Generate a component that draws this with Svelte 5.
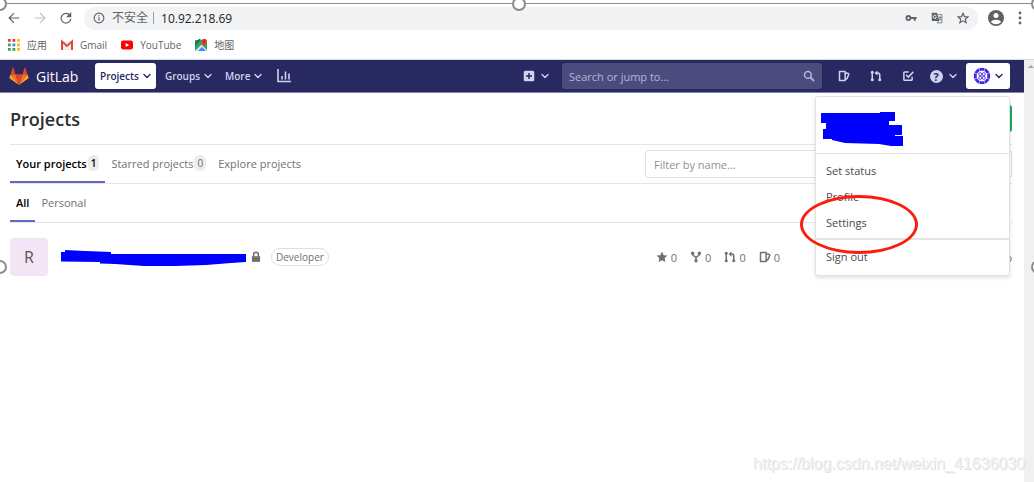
<script>
  const bookmarks = [
    { id: 'apps', label: '应用' },
    { id: 'gmail', label: 'Gmail' },
    { id: 'youtube', label: 'YouTube' },
    { id: 'maps', label: '地图' },
  ];

  const appDots = ['#ea4335', '#ea4335', '#fbbc05', '#34a853', '#4285f4', '#fbbc05', '#34a853', '#34a853', '#fbbc05'];

  const tabs = [
    { label: 'Your projects', count: 1 },
    { label: 'Starred projects', count: 0 },
    { label: 'Explore projects' },
  ];

  const scopes = ['All', 'Personal'];
  const handles = ['top-left', 'top-middle', 'top-right', 'middle-left', 'middle-right'];
  const stats = ['star', 'fork', 'merge', 'issues'];
  const petals = [0, 45, 90, 135, 180, 225, 270, 315];

  let activeTab = $state('Your projects');
  let activeScope = $state('All');
  let menuOpen = $state(true);
  let filter = $state('');
</script>

{#snippet chevron()}
  <svg class="chevron" viewBox="0 0 8 8" aria-hidden="true">
    <path d="M1 2.5 4 5.5 7 2.5" fill="none" stroke="currentColor" stroke-width="1.4" stroke-linecap="round" stroke-linejoin="round" />
  </svg>
{/snippet}

{#snippet icon(name)}
  <svg class="icon" viewBox="0 0 16 16" aria-hidden="true">
    {#if name === 'issues'}
      <path d="M2 2h7.5v12H2z M9.5 3.5l4 1.2c.7.2 1 .8.8 1.4L12 11.5 9.5 13" fill="none" stroke="currentColor" stroke-width="2" stroke-linejoin="round" />
    {:else if name === 'merge'}
      <path d="M3 4v8M13 12V6.5C13 5 12 4 10.5 4H8.5" fill="none" stroke="currentColor" stroke-width="2" />
      <path d="M10 0.5v7L6 4z" fill="currentColor" />
      <circle cx="3" cy="3" r="2" fill="currentColor" />
      <circle cx="3" cy="13" r="2" fill="currentColor" />
      <circle cx="13" cy="13" r="2" fill="currentColor" />
    {:else if name === 'todo'}
      <path d="M9 2.5H3.5a1 1 0 0 0-1 1v9a1 1 0 0 0 1 1h9a1 1 0 0 0 1-1V9" fill="none" stroke="currentColor" stroke-width="2" />
      <path d="M5.5 6.5 8.5 9.5 15 2.5" fill="none" stroke="currentColor" stroke-width="2" />
    {:else if name === 'star'}
      <path d="M8 .8l2.2 4.7 5.1.6-3.8 3.5 1 5.1L8 12.2l-4.5 2.5 1-5.1L.7 6.1l5.1-.6z" fill="currentColor" />
    {:else if name === 'fork'}
      <path d="M3.5 4c0 3.5 4.5 3 4.5 5.5V13M12.5 4c0 3.5-4.5 3-4.5 5.5" fill="none" stroke="currentColor" stroke-width="2" />
      <circle cx="3.5" cy="3" r="2.2" fill="currentColor" />
      <circle cx="12.5" cy="3" r="2.2" fill="currentColor" />
      <circle cx="8" cy="13" r="2.2" fill="currentColor" />
    {:else if name === 'lock'}
      <path d="M2.5 7h11v7.5h-11z" fill="currentColor" />
      <path d="M4.8 8V5a3.2 3.2 0 0 1 6.4 0v3" fill="none" stroke="currentColor" stroke-width="2" />
    {:else if name === 'plus'}
      <path fill-rule="evenodd" d="M3 1h10a2 2 0 0 1 2 2v10a2 2 0 0 1-2 2H3a2 2 0 0 1-2-2V3a2 2 0 0 1 2-2zm4 3v3H4v2h3v3h2V9h3V7H9V4z" fill="currentColor" />
    {:else if name === 'search'}
      <circle cx="6.5" cy="6.5" r="4.5" fill="none" stroke="currentColor" stroke-width="2" />
      <path d="M10 10l4 4" stroke="currentColor" stroke-width="2.5" stroke-linecap="round" />
    {/if}
  </svg>
{/snippet}

<div class="window">
  <div class="toolbar">
    <button class="tool" aria-label="Back">
      <svg viewBox="0 0 16 16"><path d="M15 8H2M8 1.5 1.5 8 8 14.5" /></svg>
    </button>
    <button class="tool faded" aria-label="Forward">
      <svg viewBox="0 0 16 16"><path d="M1 8h13M8 1.5 14.5 8 8 14.5" /></svg>
    </button>
    <button class="tool" aria-label="Reload">
      <svg viewBox="0 0 16 16"><path d="M13 4A6.5 6.5 0 1 0 14.5 9" /><path class="solid" d="M15 0v7H8z" /></svg>
    </button>
    <div class="omnibox">
      <svg class="info" viewBox="0 0 16 16" aria-hidden="true">
        <circle cx="8" cy="8" r="6.5" fill="none" stroke="currentColor" stroke-width="1.5" />
        <path d="M8 7v4.5M8 4.3v1.5" stroke="currentColor" stroke-width="1.5" />
      </svg>
      <span class="insecure">不安全</span>
      <input class="address" aria-label="Address" value="10.92.218.69" />
      <button class="tool" aria-label="Passwords">
        <svg viewBox="0 0 16 16"><circle cx="4.5" cy="8" r="2.7" class="thick" /><path class="thick" d="M7 8h8.5M13 8v3.5" /></svg>
      </button>
      <button class="tool" aria-label="Translate">
        <svg viewBox="0 0 16 16">
          <path class="solid" d="M1 1h7l3 11H2a1 1 0 0 1-1-1z" />
          <path class="thin" d="M9 3.5h5.5v11H8L10.5 12M10 7h4M12 6v1.2M13.3 7c-.4 2-1.6 3.2-2.8 4M11 8.5c.6 1.2 1.5 2 2.6 2.5" />
          <path class="cutout" d="M7 5.2A2.2 2.2 0 1 0 7.3 7H5.5" />
        </svg>
      </button>
      <button class="tool" aria-label="Bookmark this page">
        <svg viewBox="0 0 16 16"><path d="M8 1.8l1.9 4.3 4.6.4-3.5 3.1 1.1 4.6L8 11.8l-4.1 2.4L5 9.6 1.5 6.5l4.6-.4z" /></svg>
      </button>
    </div>
    <button class="tool account" aria-label="Account">
      <svg viewBox="0 0 16 16">
        <circle class="solid" cx="8" cy="8" r="8" />
        <circle class="hole" cx="8" cy="5.5" r="2.5" />
        <path class="hole" d="M3 12.2C4 9 12 9 13 12.2 10.5 14.8 5.5 14.8 3 12.2z" />
      </svg>
    </button>
    <button class="tool dots" aria-label="Browser menu">
      <svg viewBox="0 0 4 16">
        <circle class="solid" cx="2" cy="3" r="1.4" /><circle class="solid" cx="2" cy="8" r="1.4" /><circle class="solid" cx="2" cy="13" r="1.4" />
      </svg>
    </button>
  </div>

  <nav class="bookmarks" aria-label="Bookmarks">
    {#each bookmarks as { id, label }}
      <a href="#{id}">
        <svg viewBox="0 0 12 12" aria-hidden="true">
          {#if id === 'apps'}
            {#each appDots as fill, i}
              <rect x={(i % 3) * 4.5} y={Math.floor(i / 3) * 4.5} width="2.8" height="2.8" {fill} />
            {/each}
          {:else if id === 'gmail'}
            <path d="M0 2h12v9H0z" fill="#eee" />
            <path d="M1 11V2.5l5 4.5 5-4.5V11" fill="none" stroke="#dd4b3e" stroke-width="2" />
          {:else if id === 'youtube'}
            <rect y="1.5" width="12" height="9" rx="2.2" fill="#f00" />
            <path d="M4.7 4v4L8.2 6z" fill="#fff" />
          {:else}
            <path d="M0 1h12v11H0z" fill="#34a362" />
            <path d="M0 12 6.5 5.5 12 11v1z" fill="#dce5ee" />
            <path d="M3 12l4-4 4 4z" fill="#4285f4" />
            <path d="M0 4 4 0h2L0 7z" fill="#176b41" />
            <path d="M9 8C8.6 5.5 6.5 5 6.5 2.5a2.5 2.5 0 0 1 5.5 0C12 5 9.4 5.5 9 8z" fill="#e53c30" />
            <circle cx="9.2" cy="2.6" r=".9" fill="#8c1d18" />
          {/if}
        </svg>
        {label}
      </a>
    {/each}
  </nav>

  <div class="viewport">
    <div class="site">
      <header class="navbar">
        <a class="brand" href="#home">
          <svg viewBox="0 0 36 34" aria-hidden="true">
            <path d="M18 34l6.6-20.5H11.4z" fill="#e24329" />
            <path d="M18 34l-6.6-20.5H2.1zM18 34l6.6-20.5h9.3z" fill="#fc6d26" />
            <path d="M2.1 13.5 0 20c-.2.7 0 1.2.6 1.6L18 34zM33.9 13.5 36 20c.2.7 0 1.2-.6 1.6L18 34z" fill="#fca326" />
            <path d="M2.1 13.5h9.3L7.4.8c-.2-.6-1-.6-1.2 0zM33.9 13.5h-9.3L28.6.8c.2-.6 1-.6 1.2 0z" fill="#e24329" />
          </svg>
          GitLab
        </a>
        <button class="nav-item selected">Projects {@render chevron()}</button>
        <button class="nav-item">Groups {@render chevron()}</button>
        <button class="nav-item">More {@render chevron()}</button>
        <a class="nav-icon chart" href="#analytics" aria-label="Analytics">
          <svg viewBox="0 0 14 14">
            <path d="M1 0v12.5h13M5 7v3.5M8.5 2.5v8M12 4.5v6" fill="none" stroke="currentColor" stroke-width="1.6" />
          </svg>
        </a>
        <button class="nav-icon wide create" aria-label="New">{@render icon('plus')}{@render chevron()}</button>
        <label class="search">
          <input type="search" placeholder="Search or jump to..." aria-label="Search or jump to" />
          {@render icon('search')}
        </label>
        <a class="nav-icon" href="#issues" aria-label="Issues">{@render icon('issues')}</a>
        <a class="nav-icon" href="#merge-requests" aria-label="Merge requests">{@render icon('merge')}</a>
        <a class="nav-icon" href="#todos" aria-label="To-Do List">{@render icon('todo')}</a>
        <button class="nav-icon wide" aria-label="Help"><span class="help">?</span>{@render chevron()}</button>

        <div class="user">
          <button class="user-toggle" aria-label="User menu" aria-expanded={menuOpen} onclick={() => (menuOpen = !menuOpen)}>
            <svg class="identicon" viewBox="-10 -10 20 20" aria-hidden="true">
              {#each petals as angle}
                <path d="M-3-9h6L2.4-5.8h-4.800z" transform="rotate({angle})" />
              {/each}
              <circle cx="-2" cy="-2" r="1.7" />
              <circle cx="2" cy="-2" r="1.7" />
              <circle cx="-2" cy="2" r="1.7" />
              <circle cx="2" cy="2" r="1.7" />
            </svg>
            {@render chevron()}
          </button>

          {#if menuOpen}
            <div class="user-menu">
              <div class="user-name">
                <svg viewBox="0 0 83 36" aria-hidden="true">
                  <path d="M0 1h59V0h15v9h-6v4h13v10h-7v1h8v10H70l-12-2-34-1-13-3v-1H2V17h3v-6H0z" fill="#00f" />
                </svg>
              </div>
              <ul>
                <li><button>Set status</button></li>
                <li><a href="#profile">Profile</a></li>
                <li><a href="#settings">Settings</a></li>
              </ul>
              <ul>
                <li><a href="#sign-out">Sign out</a></li>
              </ul>
              <div class="circled"></div>
            </div>
          {/if}
        </div>
      </header>

      <main>
        <div class="title">
          <h1>Projects</h1>
          <button class="new-project">New project</button>
        </div>

        <div class="tab-bar">
          <nav class="tabs" aria-label="Projects">
            {#each tabs as { label, count }}
              <button class="tab" class:active={label === activeTab} onclick={() => (activeTab = label)}>
                {label}
                {#if count !== undefined}<span class="count">{count}</span>{/if}
              </button>
            {/each}
          </nav>
          <div class="filters">
            <input type="search" placeholder="Filter by name..." aria-label="Filter by name" bind:value={filter} />
            <select aria-label="Sort by">
              <option>Last updated</option>
              <option>Name</option>
            </select>
          </div>
        </div>

        <nav class="tab-bar tabs" aria-label="Scope">
          {#each scopes as scope}
            <button class="tab" class:active={scope === activeScope} onclick={() => (activeScope = scope)}>{scope}</button>
          {/each}
        </nav>

        <div class="project">
          <div class="avatar">R</div>
          <svg class="project-name" viewBox="0 0 185 18" aria-hidden="true">
            <path d="M0 4h4V2l20 1 26 1v2h135v8l-15 1-25 2-30 1h-32l-29-2-15-.5V14L0 13.500z" fill="#00f" />
          </svg>
          {@render icon('lock')}
          <span class="role">Developer</span>
          <div class="stats">
            {#each stats as stat}
              <a href="#{stat}">{@render icon(stat)}0</a>
            {/each}
          </div>
          <span class="updated">Updated 4 days ago</span>
        </div>
      </main>
    </div>
    <div class="scrollbar"></div>
  </div>

  <div class="frame">
    {#each handles as handle}
      <span class="handle {handle}"></span>
    {/each}
  </div>
  <div class="watermark">https://blog.csdn.net/weixin_41636030</div>
</div>

<style>
  :global(body) {
    background: #fff;
  }

  .window {
    position: relative;
    display: flex;
    flex-direction: column;
    min-height: 100vh;
    overflow: hidden;
    font-family: 'Open Sans', 'Noto Sans', 'Noto Sans CJK SC', sans-serif;
    font-size: 11px;
    color: #2e2e2e;
  }

  .window * {
    box-sizing: border-box;
  }

  button,
  input,
  select {
    margin: 0;
    padding: 0;
    border: 0;
    background: none;
    font: inherit;
    color: inherit;
  }

  button {
    cursor: pointer;
  }

  a {
    color: inherit;
    text-decoration: none;
  }

  svg {
    display: block;
    flex: none;
  }

  ul {
    margin: 0;
    padding: 0;
    list-style: none;
  }

  .icon {
    width: 12px;
    height: 12px;
  }

  .chevron {
    width: 8px;
    height: 8px;
  }

  /* browser */
  .toolbar {
    display: flex;
    align-items: center;
    gap: 14px;
    height: 24px;
    margin-top: 6px;
    padding: 0 12px 0 8px;
    color: #5f6368;
  }

  .tool svg {
    width: 12px;
    height: 12px;
    fill: none;
    stroke: currentColor;
    stroke-width: 1.6;
  }

  .tool .solid {
    fill: currentColor;
    stroke: none;
  }

  .tool .hole {
    fill: #fff;
    stroke: none;
  }

  .tool .thick {
    stroke-width: 2.4;
  }

  .tool .thin {
    stroke-width: 1;
  }

  .tool .cutout {
    stroke: #f1f3f4;
    stroke-width: 1.2;
  }

  .faded {
    color: #bfc1c3;
  }

  .omnibox {
    flex: 1;
    display: flex;
    align-items: center;
    gap: 14px;
    min-width: 0;
    height: 23px;
    margin-left: -2px;
    padding: 0 9px;
    border-radius: 12px;
    background: #f1f3f4;
  }

  .info {
    width: 12px;
    height: 12px;
  }

  .insecure {
    margin-left: -7px;
    padding-right: 5px;
    border-right: 1px solid #9aa0a6;
    font-size: 12px;
    line-height: 12px;
  }

  .address {
    flex: 1;
    min-width: 0;
    margin-left: -7px;
    font-size: 12px;
    color: #202124;
  }

  .account svg {
    width: 16px;
    height: 16px;
  }

  .dots svg {
    width: 4px;
    height: 16px;
  }

  .account {
    margin-left: -4px;
  }

  .bookmarks {
    display: flex;
    align-items: center;
    gap: 14px;
    height: 30px;
    padding: 0 8px;
    border-bottom: 1px solid #dadce0;
    font-size: 10px;
    color: #5f6368;
  }

  .bookmarks a {
    display: flex;
    align-items: center;
    gap: 7px;
  }

  .bookmarks svg {
    width: 12px;
    height: 12px;
  }

  .viewport {
    flex: 1;
    display: flex;
  }

  .site {
    flex: 1;
    min-width: 0;
  }

  .scrollbar {
    width: 10px;
    padding-top: 5px;
    background: #f0f0f0;
  }

  .scrollbar::before {
    content: '';
    display: block;
    margin-left: 4px;
    border: 3px solid transparent;
    border-top: 0;
    border-bottom: 3px solid #a3a3a3;
  }

  /* navbar */
  .navbar {
    display: flex;
    align-items: center;
    height: 33px;
    padding: 0 14px 0 9px;
    border-bottom: 1px solid #8583ab;
    background: #292961;
    color: #d1d1f0;
  }

  .brand {
    display: flex;
    align-items: center;
    gap: 7px;
    width: 86px;
    font-size: 14px;
    color: #fff;
  }

  .brand svg {
    width: 20px;
    height: 18px;
  }

  .nav-item {
    display: flex;
    align-items: center;
    gap: 4px;
    height: 26px;
    padding: 0 4px 0 9px;
    border-radius: 3px;
    font-weight: 600;
    font-size: 10px;
  }

  .nav-item.selected {
    padding: 0 5px;
    background: #fff;
    color: #292961;
  }

  .nav-icon {
    display: flex;
    align-items: center;
    justify-content: center;
    gap: 6px;
    width: 32px;
    height: 26px;
  }

  .nav-icon.wide {
    width: 38px;
  }

  .chart {
    margin-left: 2px;
  }

  .chart svg {
    width: 14px;
    height: 14px;
  }

  .create {
    margin-left: auto;
  }

  .search {
    display: flex;
    align-items: center;
    width: 260px;
    height: 26px;
    margin: 0 6px 0 7px;
    padding: 0 7px;
    border-radius: 3px;
    background: #4c4b7d;
    color: #b5b4d8;
  }

  .search input {
    flex: 1;
    min-width: 0;
    outline: none;
  }

  ::placeholder {
    color: inherit;
    opacity: 1;
  }

  .help {
    width: 13px;
    height: 13px;
    border-radius: 50%;
    background: #d1d1f0;
    color: #292961;
    font-size: 11px;
    font-weight: 700;
    line-height: 13px;
  }

  .user {
    position: relative;
    margin-left: 4px;
  }

  .user-toggle {
    display: flex;
    align-items: center;
    justify-content: center;
    gap: 4px;
    width: 44px;
    height: 26px;
    border-radius: 3px;
    background: #fff;
    color: #292961;
  }

  .identicon {
    width: 18px;
    height: 18px;
    fill: #4326e8;
  }

  .identicon circle {
    fill: none;
    stroke: #4326e8;
    stroke-width: 1;
  }

  .user-menu {
    position: absolute;
    top: 33px;
    right: 0;
    z-index: 1;
    width: 195px;
    padding-bottom: 3px;
    border: 1px solid #e1e1e1;
    border-radius: 3px;
    background: #fff;
    box-shadow: 0 2px 4px rgba(0, 0, 0, 0.12);
    color: #4a4a4a;
  }

  .user-name {
    padding: 15px 5px 5px;
  }

  .user-name svg {
    width: 83px;
    height: 36px;
  }

  .user-menu ul {
    padding: 4px 0 2px;
    border-top: 1px solid #e5e5e5;
  }

  .user-menu ul + ul {
    border-top-width: 2px;
  }

  .user-menu li > * {
    display: block;
    width: 100%;
    padding: 0 10px;
    line-height: 26px;
    text-align: left;
  }

  .circled {
    position: absolute;
    top: 98px;
    left: -16px;
    width: 118px;
    height: 59px;
    border: 3px solid #fd1c0c;
    border-radius: 50%;
    pointer-events: none;
  }

  /* projects */
  main {
    padding: 0 12px 0 10px;
  }

  .title {
    display: flex;
    align-items: center;
    justify-content: space-between;
    height: 52px;
    border-bottom: 1px solid #e5e5e5;
  }

  h1 {
    margin: 0;
    font-size: 18px;
    font-weight: 600;
  }

  .new-project {
    height: 27px;
    padding: 0 10px;
    border-radius: 3px;
    background: #1aaa55;
    color: #fff;
  }

  .tab-bar {
    display: flex;
    justify-content: space-between;
    height: 39px;
    border-bottom: 1px solid #e5e5e5;
  }

  .tabs {
    display: flex;
    justify-content: flex-start;
  }

  .tab {
    display: flex;
    align-items: center;
    gap: 1px;
    height: 38px;
    padding: 0 6px;
    border-bottom: 2px solid transparent;
    color: #707070;
  }

  .tab.active {
    border-bottom-color: #6666c4;
    font-weight: 600;
    color: #000;
  }

  .count {
    padding: 0 3px;
    border-radius: 8px;
    background: #ececec;
    font-size: 10px;
    line-height: 16px;
  }

  .filters {
    display: flex;
    align-items: center;
    gap: 8px;
  }

  .filters input,
  .filters select {
    width: 200px;
    height: 28px;
    padding: 0 8px;
    border: 1px solid #dfdfdf;
    border-radius: 3px;
    color: #919191;
  }

  .filters select {
    width: 159px;
  }

  .project {
    display: flex;
    align-items: center;
    height: 68px;
    color: #707070;
  }

  .avatar {
    width: 38px;
    height: 38px;
    margin-right: 13px;
    border: 1px solid #eee3f2;
    border-radius: 4px;
    background: #f3e5f5;
    color: #555;
    font-size: 16px;
    line-height: 36px;
    text-align: center;
  }

  .project-name {
    width: 185px;
    height: 18px;
    margin-right: 4px;
  }

  .role {
    margin-left: 9px;
    padding: 0 4px;
    border: 1px solid #dfdfdf;
    border-radius: 9px;
    font-size: 10px;
    line-height: 16px;
  }

  .stats {
    display: flex;
    gap: 13px;
    margin-left: auto;
  }

  .stats a {
    display: flex;
    align-items: center;
    gap: 3px;
  }

  .updated {
    width: 232px;
    text-align: right;
  }

  /* selection frame */
  .frame {
    position: absolute;
    inset: 3px -4px 0 0;
    border-top: 1px solid #8c8c8c;
    pointer-events: none;
  }

  .handle {
    position: absolute;
    width: 14px;
    height: 14px;
    margin: -7px;
    border: 2px solid #8c8c8c;
    border-radius: 50%;
    background: #fff;
  }

  .top-left {
    top: 0;
    left: 0;
  }

  .top-middle {
    top: 0;
    left: 50%;
  }

  .top-right {
    top: 0;
    left: 100%;
  }

  .middle-left {
    top: 55%;
    left: 0;
  }

  .middle-right {
    top: 55%;
    left: 100%;
  }

  .watermark {
    position: absolute;
    right: 9px;
    bottom: 9px;
    font-family: 'Liberation Sans', sans-serif;
    font-size: 16px;
    color: #f2f2f2;
    text-shadow: 1px 1px 0 #e0e0e0;
    pointer-events: none;
  }
</style>
